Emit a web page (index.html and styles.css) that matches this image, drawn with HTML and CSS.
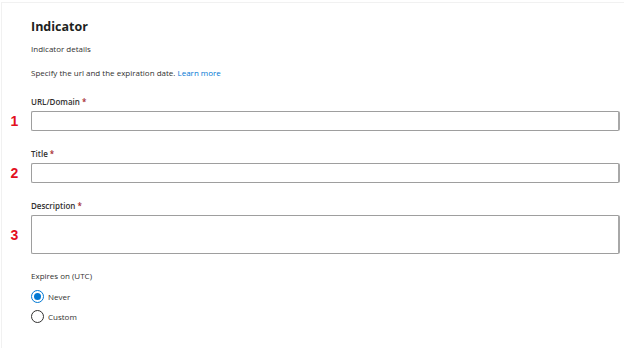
FILE: index.html
```html
<!DOCTYPE html>
<html lang="en">
<head>
  <meta charset="UTF-8">
  <title>Indicator</title>
  <link rel="stylesheet" href="styles.css">
</head>
<body>
  <div class="panel">
    <h1 class="title">Indicator</h1>
    <p class="section">Indicator details</p>
    <p class="hint">Specify the url and the expiration date. <a href="#" class="link">Learn more</a></p>

    <div class="field">
      <label class="label">URL/Domain <span class="req">*</span></label>
      <div class="row">
        <span class="marker">1</span>
        <input type="text" class="input">
      </div>
    </div>

    <div class="field">
      <label class="label">Title <span class="req">*</span></label>
      <div class="row">
        <span class="marker">2</span>
        <input type="text" class="input">
      </div>
    </div>

    <div class="field">
      <label class="label">Description <span class="req">*</span></label>
      <div class="row">
        <span class="marker">3</span>
        <textarea class="input area"></textarea>
      </div>
    </div>

    <div class="expires">
      <div class="label">Expires on (UTC)</div>
      <div class="radios">
        <label class="radio checked"><span class="circle"></span>Never</label>
        <label class="radio"><span class="circle"></span>Custom</label>
      </div>
    </div>
  </div>
</body>
</html>
```
FILE: styles.css
```css
*, *::before, *::after {
  box-sizing: border-box;
}
body {
  margin: 0;
  background: white;
  font-family: "Open Sans", "Noto Sans", sans-serif;
  color: #323130;
}
.panel {
  margin: 2px 0 0 1px;
  height: 346px;
  border-top: 1px solid #f1f1f1;
  border-left: 1px solid #f1f1f1;
  padding: 0 4px 0 29px;
}
.title {
  margin: 14px 0 0;
  font-size: 12.5px;
  line-height: 20px;
  font-weight: 700;
  color: #201f1e;
}
.section, .hint {
  margin: 6px 0 0;
  font-size: 8px;
  line-height: 12px;
}
.hint {
  margin-top: 12px;
}
.link {
  color: #0078d4;
  text-decoration: none;
}

/* fields */
.field {
  margin-top: 17px;
}
.label {
  display: block;
  font-size: 8px;
  line-height: 12px;
  font-weight: 600;
  margin-bottom: 3px;
}
.req {
  color: #a4262c;
}
.row {
  display: flex;
  align-items: center;
  margin-left: -29px;
}
.marker {
  width: 29px;
  flex-shrink: 0;
  text-align: center;
  padding-right: 4px;
  color: #e3101e;
  font-size: 14px;
  font-weight: 700;
  font-family: "Liberation Sans", sans-serif;
}
.input {
  flex: 1;
  height: 20px;
  margin: 0;
  border: 1px solid #9e9e9e;
  border-right: 2px solid #a8a8a8;
  border-radius: 2px;
  background: white;
  font: inherit;
  resize: none;
}
.area {
  height: 39px;
}

/* expiration */
.expires {
  margin-top: 16px;
}
.expires .label {
  font-weight: 400;
}
.radios {
  display: flex;
  flex-direction: column;
  gap: 6px;
  margin-top: 7px;
}
.radio {
  display: flex;
  align-items: center;
  gap: 4px;
  height: 14px;
  font-size: 8px;
}
.circle {
  width: 13px;
  height: 13px;
  border: 1px solid #323130;
  border-radius: 50%;
  display: flex;
  align-items: center;
  justify-content: center;
}
.checked .circle {
  border-color: #0078d4;
}
.checked .circle::after {
  content: "";
  width: 7px;
  height: 7px;
  border-radius: 50%;
  background: #0078d4;
}
```
